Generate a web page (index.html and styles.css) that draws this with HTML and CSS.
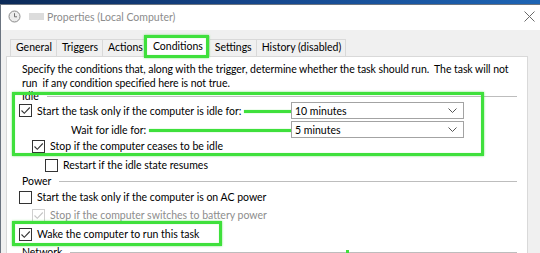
FILE: index.html
```html
<html>
<head>
<link rel="stylesheet" href="styles.css">
</head>
<body>
<div class="screen">
	<div class="desk-edge">
		<div class="edge dark"></div>
		<div class="edge light"><span>n</span><span>d</span></div>
		<div class="edge blue"><span>I</span><span>B</span><span>.</span></div>
		<div class="edge light short"></div>
		<div class="edge blue"><span>A</span><span>C</span></div>
	</div>
	<div class="window">
		<div class="titlebar">
			<svg class="app-icon" width="13" height="13" viewBox="0 0 13 13"><circle cx="6.5" cy="6.5" r="5.5" fill="#ececec" stroke="#8a8a8a"/><path d="M6.5 3.2V6.8H9" fill="none" stroke="#6f6f6f"/></svg>
			<span class="name-blur"></span>
			<span class="title">Properties (Local Computer)</span>
			<svg class="close" width="11" height="11" viewBox="0 0 11 11"><path d="M0.5 0.5L10.5 10.5M10.5 0.5L0.5 10.5" stroke="#6a6a6a" stroke-width="1"/></svg>
		</div>
		<div class="body">
			<div class="tabs">
				<a href="#" class="tab">General</a>
				<a href="#" class="tab">Triggers</a>
				<a href="#" class="tab">Actions</a>
				<a href="#" class="tab selected">Conditions</a>
				<a href="#" class="tab">Settings</a>
				<a href="#" class="tab">History (disabled)</a>
			</div>
			<div class="panel">
				<p class="intro">Specify the conditions that, along with the trigger, determine whether the task should run.&nbsp; The task will not<br>run&nbsp; if any condition specified here is not true.</p>

				<div class="legend idle"><span>Idle</span><i></i></div>
				<div class="row pick">
					<div class="lead-in">
						<span class="box checked"><svg width="11" height="11" viewBox="0 0 11 11"><path d="M1.5 5.5L4.3 8.3L9.8 2.5" fill="none" stroke="#333" stroke-width="1.1"/></svg></span>
						<label>Start the task only if the computer is idle for:</label>
						<b class="pointer"></b>
					</div>
					<div class="select">10 minutes<svg width="9" height="5" viewBox="0 0 9 5"><path d="M0.5 0.5L4.5 4.5L8.5 0.5" fill="none" stroke="#555"/></svg></div>
				</div>
				<div class="row pick wait">
					<div class="lead-in">
						<label>Wait for idle for:</label>
						<b class="pointer"></b>
					</div>
					<div class="select">5 minutes<svg width="9" height="5" viewBox="0 0 9 5"><path d="M0.5 0.5L4.5 4.5L8.5 0.5" fill="none" stroke="#555"/></svg></div>
				</div>
				<div class="row indent stop">
					<span class="box checked"><svg width="11" height="11" viewBox="0 0 11 11"><path d="M1.5 5.5L4.3 8.3L9.8 2.5" fill="none" stroke="#333" stroke-width="1.1"/></svg></span>
					<label>Stop if the computer ceases to be idle</label>
				</div>
				<div class="row indent2 restart">
					<span class="box"></span>
					<label>Restart if the idle state resumes</label>
				</div>

				<div class="legend power"><span>Power</span><i></i></div>
				<div class="row ac">
					<span class="box"></span>
					<label>Start the task only if the computer is on AC power</label>
				</div>
				<div class="row indent battery disabled">
					<span class="box checked"><svg width="11" height="11" viewBox="0 0 11 11"><path d="M1.5 5.5L4.3 8.3L9.8 2.5" fill="none" stroke="#c4c4c4" stroke-width="1.1"/></svg></span>
					<label>Stop if the computer switches to battery power</label>
				</div>
				<div class="row wake">
					<span class="box checked"><svg width="11" height="11" viewBox="0 0 11 11"><path d="M1.5 5.5L4.3 8.3L9.8 2.5" fill="none" stroke="#333" stroke-width="1.1"/></svg></span>
					<label>Wake the computer to run this task</label>
				</div>

				<div class="legend network"><span>Network</span><i></i></div>
			</div>
		</div>
	</div>

	<div class="mark tab-mark"></div>
	<div class="mark idle-mark"></div>
	<div class="mark wake-mark"></div>
	<div class="dot"></div>
</div>
</body>
</html>
```

FILE: styles.css
```css
html,body {
	margin: 0;
	padding: 0;
	width: 540px;
	height: 253px;
	overflow: hidden;
	font-family: Lato, "Noto Sans", sans-serif;
	font-size: 10.5px;
	color: #000;
	cursor: default;
}
body {
	background: linear-gradient(90deg, #0b2a58 0%, #15458a 45%, #1d64b4 100%);
}
.screen {
	position: relative;
	display: flex;
	padding-top: 4px;
	height: 249px;
	overflow: hidden;
}

.desk-edge {
	display: flex;
	flex-direction: column;
	width: 4px;
	margin-top: -4px;
	overflow: hidden;
}
.edge {
	display: flex;
	flex-direction: column;
	font-size: 9px;
	line-height: 12px;
	overflow: hidden;
}
.edge.dark {
	height: 88px;
	background: #1a2c48;
}
.edge.light {
	height: 80px;
	background: #dfe3e8;
	color: #333;
	padding-top: 18px;
	box-sizing: border-box;
}
.edge.light.short {
	height: 14px;
	padding: 0;
	background: #e9edf2;
}
.edge.blue {
	height: 40px;
	background: #2c6cc2;
	color: #fff;
}
.edge span {
	margin-left: -3px;
}

.window {
	flex: none;
	width: 547px;
	background: #f0f0f0;
	border-left: 1px solid #6b7480;
	border-top: 1px solid #6b7480;
}

.titlebar {
	display: flex;
	align-items: center;
	height: 25px;
	padding: 0 0 2px 7px;
	box-sizing: border-box;
	background: #fff;
	color: #8c8c8c;
}
.app-icon {
	margin-right: 8px;
}
.name-blur {
	width: 15px;
	height: 7px;
	margin-right: 3px;
	background: #dcdcdc;
	filter: blur(0.6px);
}
.title {
	font-size: 10.5px;
}
.close {
	margin-left: auto;
	margin-right: 13px;
}

.body {
	padding: 0 0 0 5px;
}

.tabs {
	display: flex;
	align-items: flex-end;
	height: 26px;
	padding-left: 4px;
}
.tab {
	height: 16px;
	line-height: 15px;
	padding: 0 4px 0 5px;
	border: 1px solid #d9d9d9;
	border-bottom: none;
	margin-right: -1px;
	background: #f0f0f0;
	color: #000;
	text-decoration: none;
	white-space: nowrap;
}
.tab.selected {
	position: relative;
	z-index: 1;
	height: 20px;
	margin: 0 -1px -1px -1px;
	padding: 0 6px;
	background: #fff;
	line-height: 18px;
}

.panel {
	box-sizing: border-box;
	width: 522px;
	height: 230px;
	padding: 5px 10px 0 12px;
	background: #fff;
	border: 1px solid #d9d9d9;
}
.intro {
	margin: 0 0 0 3px;
	line-height: 14px;
	letter-spacing: -0.06px;
	white-space: nowrap;
}

.legend {
	display: flex;
	align-items: center;
	height: 16px;
	margin-left: 3px;
}
.legend i {
	flex: 1;
	height: 1px;
	margin-left: 8px;
	background: #bdbdbd;
}
.legend.idle {
	height: 12px;
}
.legend.network {
	margin-top: 2px;
}

.row {
	display: flex;
	align-items: center;
	height: 16px;
	white-space: nowrap;
}
.row label {
	margin-left: 5px;
}
.row.indent {
	padding-left: 13px;
}
.row.indent2 {
	padding-left: 26px;
}
.row.pick {
	height: 17px;
}
.row.wait {
	margin-top: 2px;
}
.row.restart {
	margin-top: 3px;
}
.row.battery {
	margin-top: 2px;
}
.row.wake {
	margin-top: 3px;
}
.row.disabled label {
	color: #8d8d8d;
}
.row.disabled .box {
	border-color: #cfcfcf;
}

.lead-in {
	display: flex;
	align-items: center;
	width: 272px;
	flex: none;
}
.wait .lead-in label {
	margin-left: 52px;
}
.pointer {
	flex: 1;
	height: 3px;
	margin: 1px 0 0 3px;
	background: #3fe03c;
	box-shadow: 0 0 1px #3fe03c;
}

.box {
	display: flex;
	align-items: center;
	justify-content: center;
	box-sizing: border-box;
	flex: none;
	width: 13px;
	height: 13px;
	border: 1px solid #333;
	background: #fff;
}

.select {
	display: flex;
	align-items: center;
	justify-content: space-between;
	box-sizing: border-box;
	width: 173px;
	height: 17px;
	padding: 0 6px 0 3px;
	border: 1px solid #a3a3a3;
	background: #fff;
}

.mark {
	position: absolute;
	box-sizing: border-box;
	border: 3px solid #3fe03c;
	box-shadow: 0 0 2px rgba(63,224,60,0.7), inset 0 0 1px rgba(63,224,60,0.6);
	z-index: 5;
}
.tab-mark {
	left: 144px;
	top: 35px;
	width: 65px;
	height: 23px;
}
.idle-mark {
	left: 12px;
	top: 92px;
	width: 472px;
	height: 64px;
}
.wake-mark {
	left: 12px;
	top: 221px;
	width: 210px;
	height: 25px;
}
.dot {
	position: absolute;
	left: 346px;
	top: 250px;
	width: 3px;
	height: 3px;
	background: #3fe03c;
}
```
